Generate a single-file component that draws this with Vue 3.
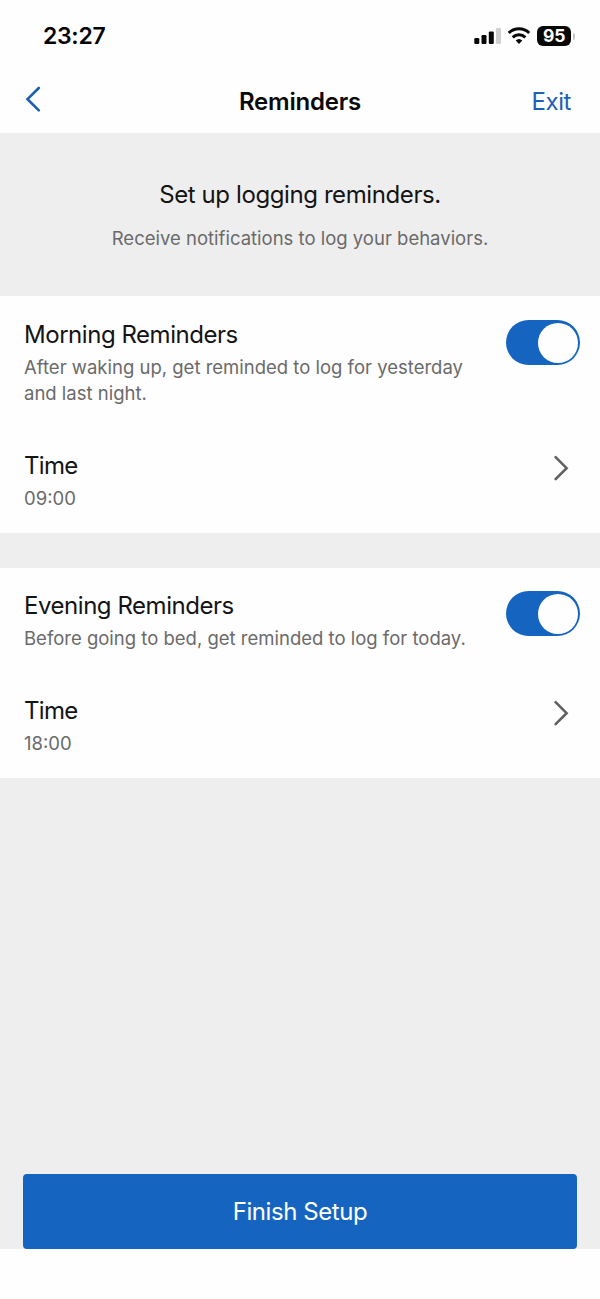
<script setup>
import { ref } from 'vue'

const groups = ref([
  {
    id: 'morning',
    title: 'Morning Reminders',
    lines: ['After waking up, get reminded to log for yesterday', 'and last night.'],
    enabled: true,
    time: '09:00',
  },
  {
    id: 'evening',
    title: 'Evening Reminders',
    lines: ['Before going to bed, get reminded to log for today.'],
    enabled: true,
    time: '18:00',
  },
])
</script>

<template>
  <div class="screen">
    <div class="status">
      <span class="clock">23:27</span>
      <div class="indicators">
        <svg class="signal" width="28" height="18" viewBox="0 0 28 18">
          <rect x="0.3" y="11" width="5" height="6" rx="1.2" />
          <rect x="7.5" y="8" width="5" height="9" rx="1.2" />
          <rect x="14.8" y="4.4" width="5" height="12.6" rx="1.2" />
          <rect class="dim" x="22" y="1" width="5" height="16" rx="1.2" />
        </svg>
        <svg class="wifi" width="24" height="18" viewBox="0 0 24 18">
          <path d="M1.8 6 A14.6 14.6 0 0 1 22.2 6" />
          <path d="M5.7 10.4 A9 9 0 0 1 18.3 10.4" />
          <path class="dot" d="M8.7 13.6 A4.8 4.8 0 0 1 15.3 13.6 L12 17 Z" />
        </svg>
        <div class="battery"><span class="level">95</span></div>
        <span class="cap"></span>
      </div>
    </div>

    <header class="nav">
      <button class="back" aria-label="Back">
        <svg width="18" height="28" viewBox="0 0 18 28">
          <path d="M14.8 3 L3.5 14.2 L14.8 25.4" />
        </svg>
      </button>
      <h1 class="nav-title">Reminders</h1>
      <button class="exit">Exit</button>
    </header>

    <section class="intro">
      <h2 class="intro-title">Set up logging reminders.</h2>
      <p class="intro-text">Receive notifications to log your behaviors.</p>
    </section>

    <section v-for="g in groups" :key="g.id" class="group" :class="g.id">
      <div class="row">
        <div>
          <div class="title">{{ g.title }}</div>
          <div class="desc" v-for="line in g.lines" :key="line">{{ line }}</div>
        </div>
        <button
          class="toggle"
          :class="{ on: g.enabled }"
          role="switch"
          :aria-checked="g.enabled"
          @click="g.enabled = !g.enabled"
        >
          <span class="knob"></span>
        </button>
      </div>
      <div class="row time">
        <div>
          <div class="title time-title">Time</div>
          <div class="desc">{{ g.time }}</div>
        </div>
        <svg class="chevron" width="18" height="28" viewBox="0 0 18 28">
          <path d="M3.6 3.2 L14.6 14.2 L3.6 25.2" />
        </svg>
      </div>
    </section>

    <div class="bottom">
      <button class="finish">Finish Setup</button>
    </div>
  </div>
</template>

<style>
body {
  margin: 0;
  background: #fefefe;
}
</style>

<style scoped>
.screen {
  display: flex;
  flex-direction: column;
  width: 600px;
  height: 1299px;
  background: #eeeeee;
  font-family: Inter, 'Liberation Sans', sans-serif;
  color: #141414;
  overflow: hidden;
}
h1,
h2,
p {
  margin: 0;
  font-weight: 400;
}
button {
  border: 0;
  padding: 0;
  background: none;
  font: inherit;
  cursor: pointer;
}
.status {
  display: flex;
  justify-content: space-between;
  align-items: center;
  height: 72px;
  padding: 0 25px 0 43px;
  background: #fefefe;
}
.clock {
  font-size: 23px;
  font-weight: 600;
  line-height: 30px;
  letter-spacing: -0.3px;
  color: #050505;
}
.indicators {
  display: flex;
  align-items: center;
}
.signal {
  fill: #080808;
}
.signal .dim {
  fill: #cfcfcf;
}
.wifi {
  margin-left: 5.5px;
  fill: none;
  stroke: #080808;
  stroke-width: 3;
}
.wifi .dot {
  fill: #080808;
  stroke: none;
}
.battery {
  display: flex;
  align-items: center;
  justify-content: center;
  width: 34px;
  height: 20px;
  margin-left: 6px;
  border-radius: 6px;
  background: #080808;
}
.level {
  font-size: 17.5px;
  font-weight: 700;
  line-height: 20px;
  color: #fff;
}
.cap {
  width: 2px;
  height: 7px;
  margin-left: 1.8px;
  border-radius: 0 2px 2px 0;
  background: #c8c8c8;
}
.nav {
  display: grid;
  grid-template-columns: 1fr auto 1fr;
  align-items: center;
  height: 61px;
  padding: 0 24px 2px;
  box-sizing: border-box;
  background: #fefefe;
}
.back {
  justify-self: start;
  height: 28px;
  margin-top: -5px;
}
.back svg {
  display: block;
  fill: none;
  stroke: #1b5fb0;
  stroke-width: 2.6;
  stroke-linecap: round;
}
.nav-title {
  font-size: 24px;
  font-weight: 600;
  line-height: 30px;
  letter-spacing: -0.2px;
  color: #0a0a0a;
}
.exit {
  justify-self: end;
  margin-right: 5px;
  font-size: 24px;
  line-height: 30px;
  letter-spacing: -0.4px;
  color: #1f60b5;
}
.intro {
  height: 163px;
  padding-top: 47px;
  box-sizing: border-box;
  text-align: center;
}
.intro-title {
  font-size: 24px;
  line-height: 30px;
  letter-spacing: -0.4px;
}
.intro-text {
  margin-top: 15px;
  font-size: 18.5px;
  line-height: 26px;
  color: #6a6a6a;
}
.group {
  padding: 23px 20.5px 0 24px;
  box-sizing: border-box;
  background: #fefefe;
}
.morning {
  height: 237px;
  margin-bottom: 35px;
}
.evening {
  height: 210px;
  padding-top: 22px;
}
.row {
  display: flex;
  justify-content: space-between;
  align-items: flex-start;
}
.title {
  font-size: 24px;
  line-height: 31px;
  letter-spacing: -0.46px;
}
.time-title {
  letter-spacing: -0.7px;
}
.desc {
  font-size: 18.5px;
  line-height: 26px;
  color: #6a6a6a;
}
.title + .desc {
  margin-top: 4px;
}
.toggle {
  flex: none;
  display: flex;
  align-items: center;
  justify-content: flex-start;
  width: 74px;
  height: 45px;
  padding: 0 2px;
  margin-top: 1px;
  border-radius: 23px;
  background: #b5b5b5;
}
.toggle.on {
  justify-content: flex-end;
  background: #1565c0;
}
.knob {
  width: 40px;
  height: 40px;
  border-radius: 50%;
  background: #fefefe;
}
.time {
  margin-top: 44px;
}
.chevron {
  margin: 4px 9.5px 0 0;
  fill: none;
  stroke: #606060;
  stroke-width: 2.6;
  stroke-linecap: round;
}
.bottom {
  margin-top: auto;
  height: 125px;
  padding: 0 23px;
  background: linear-gradient(#eeeeee 75px, #fefefe 75px);
}
.finish {
  display: block;
  width: 554px;
  height: 75px;
  border-radius: 4px;
  background: #1565c0;
  color: #fff;
  font-size: 24px;
  line-height: 75px;
  letter-spacing: -0.42px;
}
</style>
